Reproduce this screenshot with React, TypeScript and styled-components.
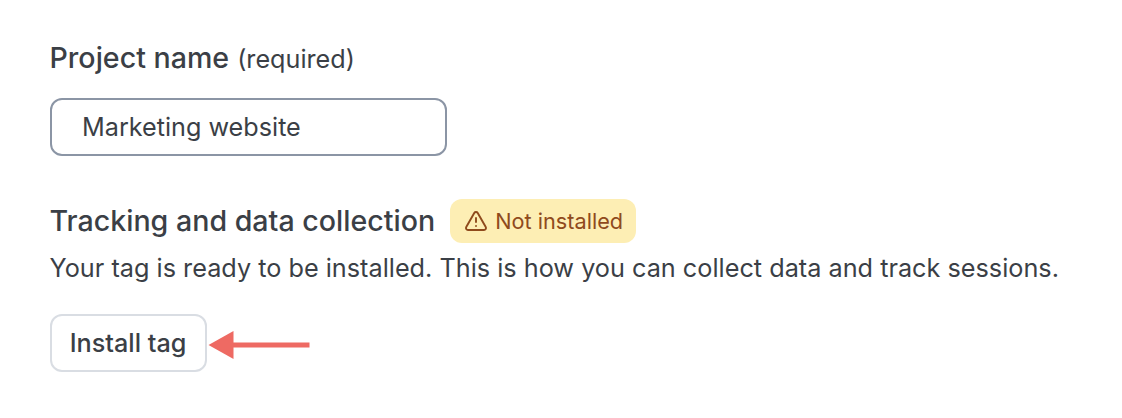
import { createGlobalStyle } from "styled-components";
import styled from "styled-components";
import { TriangleAlert } from "lucide-react";

const GlobalStyle = createGlobalStyle`
    html, body {
        margin: 0;
        padding: 0;
        background: #ffffff;
    }
    body {
        font-family: Inter, "Liberation Sans", sans-serif;
        color: #3b3f46;
    }
`

const Page = styled.div`
    width: 1122px;
    height: 418px;
    box-sizing: border-box;
    padding: 41px 50px 0 49.5px;
    display: flex;
    flex-direction: column;
    align-items: flex-start;
`

const FieldLabel = styled.div`
    font-size: 28.6px;
    line-height: 34px;
    font-weight: 500;
    display: flex;
    align-items: baseline;
    gap: 8px;
`

const Hint = styled.span`
    font-size: 25.2px;
    font-weight: 400;
`

const TextField = styled.div`
    width: 397px;
    height: 58px;
    margin-top: 21.5px;
    box-sizing: border-box;
    padding-left: 30.5px;
    display: flex;
    align-items: center;
    border: 2px solid #8b95a5;
    border-radius: 12px;
    font-size: 25.2px;
`

const SectionHeader = styled.div`
    display: flex;
    align-items: center;
    gap: 15px;
    margin-top: 43px;
`

const SectionTitle = styled.div`
    font-size: 28.6px;
    line-height: 44px;
    font-weight: 500;
`

const StatusBadge = styled.div`
    height: 44px;
    box-sizing: border-box;
    padding: 0 13px 0 14px;
    display: flex;
    align-items: center;
    gap: 7px;
    background: #fdeeb4;
    border-radius: 12px;
    color: #8f4a1c;
    font-size: 21.7px;
`

const Description = styled.p`
    margin: 9.5px 0 0;
    font-size: 25.25px;
    line-height: 32px;
`

const ActionRow = styled.div`
    display: flex;
    align-items: center;
    margin-top: 30px;
`

const InstallButton = styled.button`
    height: 58px;
    width: 157px;
    box-sizing: border-box;
    background: #ffffff;
    border: 2px solid #d9dde3;
    border-radius: 12px;
    font-family: inherit;
    font-size: 25.2px;
    font-weight: 500;
    color: #3b3f46;
    padding: 0;
`

const ArrowIcon = styled.svg`
    margin-top: 4px;
`

const Arrow = () => (
    <ArrowIcon width="106" height="30" viewBox="0 0 106 30">
        <path d="M26.5 1V29L1.5 15Z" fill="#ee6a63" />
        <rect x="26" y="12.5" width="76.5" height="5" fill="#ee6a63" />
    </ArrowIcon>
)

export default function App() {
    return (
        <Page>
            <GlobalStyle />
            <FieldLabel>
                Project name <Hint>(required)</Hint>
            </FieldLabel>
            <TextField>Marketing website</TextField>
            <SectionHeader>
                <SectionTitle>Tracking and data collection</SectionTitle>
                <StatusBadge>
                    <TriangleAlert size={24} strokeWidth={1.9} />
                    Not installed
                </StatusBadge>
            </SectionHeader>
            <Description>Your tag is ready to be installed. This is how you can collect data and track sessions.</Description>
            <ActionRow>
                <InstallButton>Install tag</InstallButton>
                <Arrow />
            </ActionRow>
        </Page>
    )
}
